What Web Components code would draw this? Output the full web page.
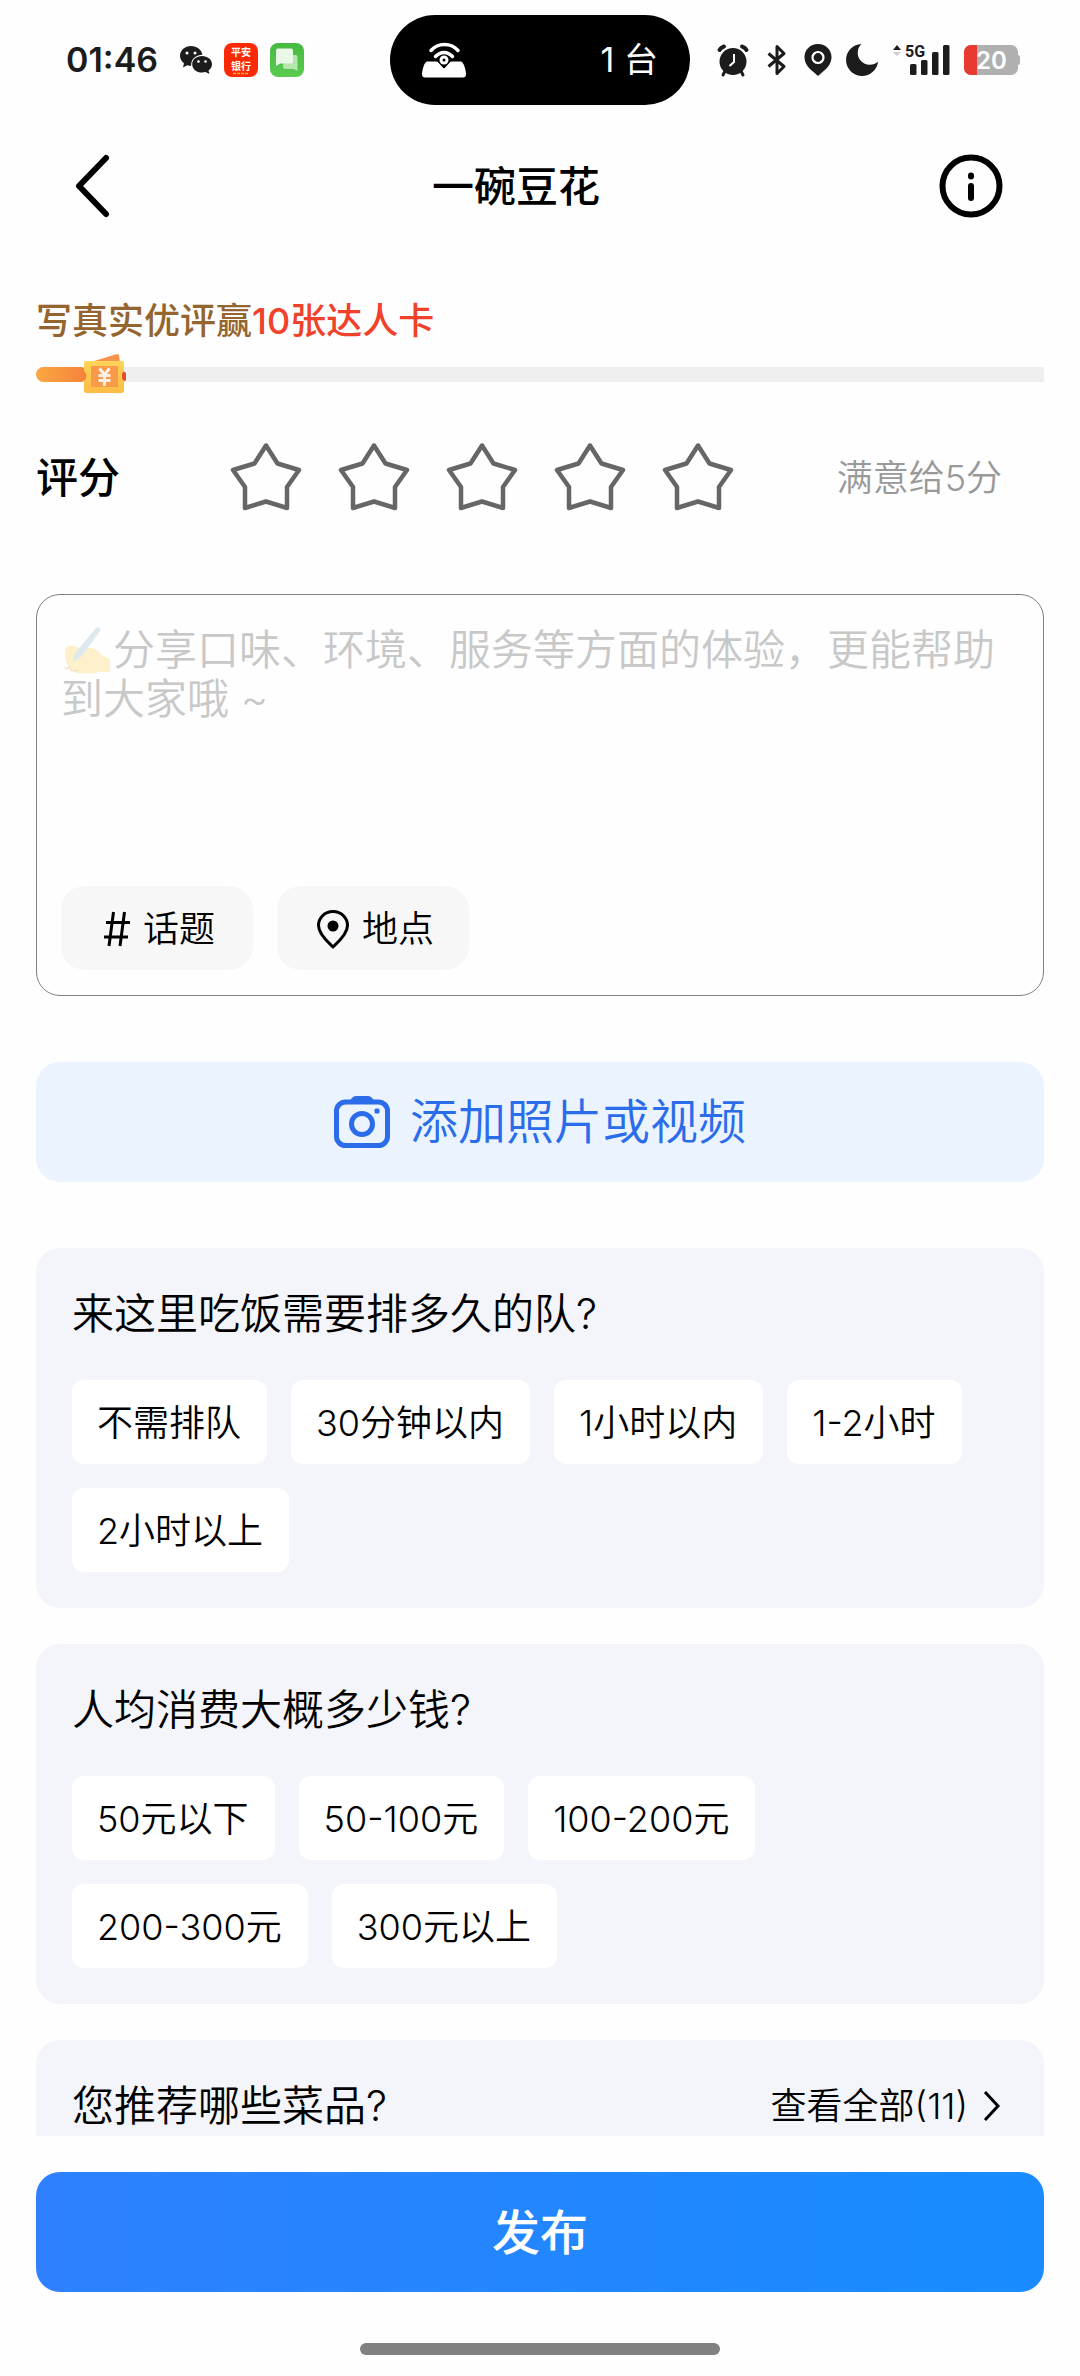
<!DOCTYPE html>
<html lang="zh-CN">
<head>
<meta charset="utf-8">
<meta name="viewport" content="width=device-width, initial-scale=1">
<title>一碗豆花</title>
<style>
  html, body { margin: 0; background: #fefefe; color: #000; }
  body { font-family: Inter, "Noto Sans CJK SC", sans-serif; font-size: 36px; line-height: 48px; }
</style>
</head>
<body>
<review-page></review-page>

<script>
const ICONS = {
  back: ['0 0 36 64', '<path d="M32 4 5 32l27 28" fill="none" stroke="currentColor" stroke-width="6" stroke-linecap="round" stroke-linejoin="round"/>'],
  info: ['0 0 64 64', '<circle cx="32" cy="32" r="28.500" fill="none" stroke="currentColor" stroke-width="6"/><rect x="29" y="18.500" width="6" height="7" rx="3" fill="currentColor"/><rect x="29" y="29" width="6" height="18" rx="3" fill="currentColor"/>'],
  star: ['0 0 72 72', '<path d="M36 4.500 47.500 22.500 69 29 57 46v21l-21-6.500L15 67V46L3 29l21.500-6.500z" fill="none" stroke="currentColor" stroke-width="4.500" stroke-linejoin="round"/>'],
  hash: ['0 0 28 38', '<path d="M10.500 2 6 36M21.500 2 17 36M3 12.500h24M1 27h24" fill="none" stroke="currentColor" stroke-width="3"/>'],
  place: ['0 0 34 40', '<path d="M17 2.500C8.500 2.500 2.500 9 2.500 16.500 2.500 25.500 13 34 17 38c4-4 14.500-12.500 14.500-21.500C31.500 9 25.500 2.500 17 2.500z" fill="none" stroke="currentColor" stroke-width="3" stroke-linejoin="round"/><circle cx="17" cy="17" r="5.500" fill="currentColor"/>'],
  camera: ['0 0 56 54', '<path d="M16 6c2-4 4-5 6-5h12c2 0 4 1 6 5v3H16z" fill="currentColor"/><rect x="2.500" y="7" width="51" height="43.500" rx="9" fill="none" stroke="currentColor" stroke-width="5"/><circle cx="28" cy="29" r="10.500" fill="none" stroke="currentColor" stroke-width="5"/><rect x="40.500" y="13.500" width="5" height="5" rx="1.500" fill="currentColor"/>'],
  next: ['0 0 20 32', '<path d="M3 2l13 14L3 30" fill="none" stroke="currentColor" stroke-width="3"/>'],
  wechat: ['0 0 32 28', '<path d="M11 0C5 0 0 4.300 0 9.800c0 3.100 1.500 5.600 4 7.400l-1 4.300 4.300-2.300c1.300.4 2.600.6 3.900.6-.4-6.300 4-10.700 11.300-11C21.500 3.500 17 0 11 0z" fill="#1c1c1c"/><path d="M22 10c-5.600 0-9.800 3.600-9.800 8.200 0 4.800 4.200 8.300 9.800 8.300 1.300 0 2.500-.2 3.500-.5l4 2-1-3.600c2.200-1.600 3.500-3.700 3.500-6.200C32 13.600 27.600 10 22 10z" fill="#1c1c1c"/><circle cx="7" cy="7" r="1.500" fill="#fff"/><circle cx="15" cy="7" r="1.500" fill="#fff"/><circle cx="18.500" cy="15.500" r="1.300" fill="#fff"/><circle cx="25.500" cy="15.500" r="1.300" fill="#fff"/>'],
  bank: ['0 0 34 34', '<rect width="34" height="34" rx="8" fill="#fb2a05"/><g fill="#fff" font-family="Noto Sans CJK SC, sans-serif" font-weight="700" font-size="10" text-anchor="middle"><text x="17" y="12.500">平安</text><text x="17" y="27">银行</text></g><path d="M9 30.500h16" stroke="#ffb020" stroke-width="1.500" stroke-dasharray="3 1"/>'],
  message: ['0 0 34 34', '<defs><linearGradient id="g" x1="0" y1="0" x2="0" y2="1"><stop stop-color="#47b940"/><stop offset="1" stop-color="#5bcb50"/></linearGradient></defs><rect width="34" height="34" rx="8" fill="url(#g)"/><path d="M14 12h11.500a2 2 0 0 1 2 2v14l-4-2H15a2 2 0 0 1-2-2z" fill="#b4e6ae"/><path d="M8 5.500h13a2 2 0 0 1 2 2v11a2 2 0 0 1-2 2H10l-4 2.500V7.500a2 2 0 0 1 2-2z" fill="#e9f8e7"/>'],
  hotspot: ['0 0 44 36', '<path d="M9 8.500C16 .5 29 .5 36 8.500M13.500 14.500c5-5.500 12-5.500 17 0" fill="none" stroke="#fff" stroke-width="3.500" stroke-linecap="round"/><path d="M5 19.500h34c2.500 0 5 9 5 12.500 0 2.500-1 3.500-3 3.500H3c-2 0-3-1-3-3.500 0-3.500 2.500-12.500 5-12.500z" fill="#fff"/><path d="M16 18.500l6 6.500 6-6.500z" fill="#000" stroke="#000" stroke-width="2.500" stroke-linejoin="round"/><circle cx="22" cy="18" r="4.500" fill="#fff"/><circle cx="22" cy="18" r="1.500" fill="#000"/>'],
  alarm: ['0 0 32 32', '<g fill="none" stroke="#1c1c1c" stroke-width="4" stroke-linecap="round"><path d="M2.500 6c1-2 2.500-3 4.500-3.500M29.500 6c-1-2-2.500-3-4.500-3.500"/></g><path d="M8 27l-2 4M24 27l2 4" stroke="#1c1c1c" stroke-width="3" stroke-linecap="round"/><circle cx="16" cy="17.500" r="13.500" fill="#1c1c1c"/><path d="M17 10v8l-4.500 4" fill="none" stroke="#fff" stroke-width="2"/>'],
  bluetooth: ['0 0 20 32', '<path d="M1.500 9.500 17 22.500 10 29.500V2.500L17 9.500 1.500 22.500" fill="none" stroke="#1c1c1c" stroke-width="3" stroke-linejoin="round"/>'],
  pin: ['0 0 28 32', '<path d="M14 0C6 0 .5 6 .5 13c0 6.500 4 11 9 15l4.500 4 4.500-4c5-4 9-8.500 9-15C27.500 6 22 0 14 0z" fill="#1c1c1c"/><circle cx="14" cy="13.500" r="5.500" fill="none" stroke="#fff" stroke-width="2.200"/>'],
  moon: ['0 0 32 32', '<path d="M15.500 0A16 16 0 1 0 32 17.500 11.500 11.500 0 0 1 15.500 0z" fill="#1c1c1c"/>'],
  signal: ['0 0 58 32', '<path d="M1 6l4-5 4 5z" fill="#1c1c1c"/><path d="M1 8l4 4 4-4z" fill="#ccc"/><text x="13" y="12.500" font-family="Roboto, sans-serif" font-weight="700" font-size="16" fill="#1c1c1c">5G</text><g fill="#1c1c1c"><rect x="18" y="20" width="6.500" height="11" rx="1.500"/><rect x="29" y="16" width="6.500" height="15" rx="1.500"/><rect x="40" y="8" width="6.500" height="23" rx="1.500"/><rect x="51" y="1" width="6.500" height="30" rx="1.500"/></g>'],
  battery: ['0 0 56 30', '<clipPath id="c"><rect width="54" height="30" rx="7"/></clipPath><g clip-path="url(#c)"><rect width="54" height="30" fill="#b0b0b0"/><rect width="13" height="30" fill="#e83a30"/></g><path d="M54 10q2 0 2 2v6q0 2-2 2z" fill="#b0b0b0"/><text x="27.500" y="23.500" text-anchor="middle" font-family="Inter, sans-serif" font-weight="600" font-size="24" fill="#fff">20</text>'],
  ticket: ['0 0 44 42', '<defs><linearGradient id="t" x1="0" y1="0" x2="0" y2="1"><stop stop-color="#fcd457"/><stop offset="1" stop-color="#fdbc46"/></linearGradient></defs><path d="M8 9 34 1l2 1 1 8z" fill="#f8934a"/><path d="M39 17l4 3v7l-4 3z" fill="#e84b2c"/><path d="M3 8h36a2 2 0 0 1 2 2v8q-5 5 0 10v10a2 2 0 0 1-2 2H3a2 2 0 0 1-2-2V28q5-5 0-10v-8a2 2 0 0 1 2-2z" fill="url(#t)"/><rect x="8" y="13" width="27" height="21" rx="1" fill="#f9994a"/><path d="M16.500 15.500l5 6 5-6M15.500 22.500h12M15.500 27.500h12M21.500 21v12" stroke="#fff1e6" stroke-width="3" fill="none"/>'],
  writing: ['0 0 50 50', '<path d="M3 24c1-4 4-5 9-4l9 3c8-3 14 0 20 7l7 3v13H38c-8 2-20 2-26 0l-2-3c-6-3-8-12-7-19z" fill="#fdf0ca"/><path d="M34 2c2-2 5 0 4 3L19 31l-8 5 2-9z" fill="#dde9ee"/><path d="M3 41l2 2 2-2 3 4 4-1 3 2" fill="none" stroke="#f8e4c5" stroke-width="1.500"/>']
};

const define = (name, css, html) => customElements.define(name, class extends HTMLElement {
  connectedCallback() {
    if (this.shadowRoot) return;
    const template = document.createElement('template');
    template.innerHTML = `<style>*{box-sizing:border-box}button{margin:0;padding:0;border:0;background:none;color:inherit;font:inherit;cursor:pointer}${css}</style>${typeof html === 'function' ? html(this) : html}`;
    this.attachShadow({ mode: 'open' }).append(template.content.cloneNode(true));
  }
});

define('ui-icon', ':host{display:block;flex:none}svg{display:block;overflow:visible}', el => {
  const [box, body] = ICONS[el.getAttribute('name')];
  const [, , w, h] = box.split(' ');
  return `<svg viewBox="${box}" width="${w}" height="${h}" aria-hidden="true">${body}</svg>`;
});

define('status-bar', `
  :host{display:grid;grid-template-columns:1fr auto 1fr;align-items:center;height:120px;color:#1c1c1c}
  .left{display:flex;align-items:center;gap:12px;padding-left:66px}
  time{font-size:34px;font-weight:600;margin-right:10px}
  .island{display:flex;align-items:center;justify-content:space-between;width:300px;height:90px;padding:0 32px;border-radius:45px;background:#000;color:#fff;font-size:34px}
  .right{display:flex;align-items:center;justify-content:flex-end;gap:14px;padding-right:60px}
  .bt{margin:0 3px 0 4px}
`, `
  <div class="left"><time>01:46</time><ui-icon name="wechat"></ui-icon><ui-icon name="bank"></ui-icon><ui-icon name="message"></ui-icon></div>
  <div class="island"><ui-icon name="hotspot"></ui-icon><span>1 台</span></div>
  <div class="right"><ui-icon name="alarm"></ui-icon><ui-icon class="bt" name="bluetooth"></ui-icon><ui-icon name="pin"></ui-icon><ui-icon name="moon"></ui-icon><ui-icon name="signal"></ui-icon><ui-icon name="battery"></ui-icon></div>
`);

define('nav-bar', `
  :host{display:flex;align-items:center;height:132px;padding:0 46px 0 60px}
  button{display:flex;align-items:center;justify-content:center;height:84px}
  .back{width:64px}.info{width:126px}
  h1{flex:1;margin:0;padding-top:2px;text-align:center;font-size:42px;font-weight:500}
`, `
  <button class="back" aria-label="返回"><ui-icon name="back"></ui-icon></button>
  <h1><slot></slot></h1>
  <button class="info" aria-label="说明"><ui-icon name="info"></ui-icon></button>
`);

define('reward-progress', `
  :host{display:block;padding-top:45px}
  p{margin:0 0 22px;color:#95652f;font-weight:500}
  b{color:#f0412a;font-weight:500}
  .track{height:15px;background:#efefef;display:flex;align-items:center;border-radius:8px 0 0 8px}
  .fill{width:52px;height:15px;border-radius:8px;background:linear-gradient(90deg,#fba842,#f4813a)}
  ui-icon{margin:-14px 0 -12px -5px}
`, `
  <p><slot></slot><b><slot name="prize"></slot></b></p>
  <div class="track" role="progressbar" aria-label="评价进度" aria-valuenow="5" aria-valuemin="0" aria-valuemax="100"><div class="fill"></div><ui-icon name="ticket"></ui-icon></div>
`);

define('star-rating', `
  :host{display:flex;align-items:center;height:72px;padding-right:42px}
  h2{margin:0;padding-top:2px;width:194px;font-size:42px;font-weight:500}
  .stars{display:flex;gap:36px;color:#666}
  .hint{margin-left:auto;padding-top:2px;color:#999;font-weight:350}
`, `
  <h2>评分</h2>
  <div class="stars" role="group" aria-label="评分">${[1, 2, 3, 4, 5].map(n => `<button aria-label="${n}星"><ui-icon name="star"></ui-icon></button>`).join('')}</div>
  <span class="hint"><slot></slot></span>
`);

define('review-editor', `
  :host{display:flex;flex-direction:column;position:relative;box-sizing:border-box;height:402px;padding:24px 24px 25px;border:1px solid #808080;border-radius:24px}
  textarea{flex:1;width:100%;padding:6px 0 0;border:0;outline:0;resize:none;background:none;font:inherit;font-weight:350;font-size:42px;line-height:49px;text-indent:52px}
  textarea::placeholder{color:#c8c8c8;opacity:1}
  .emoji{position:absolute;left:25px;top:31px}
  .tools{display:flex;gap:24px}
  .tools button{display:flex;align-items:center;justify-content:center;gap:12px;width:192px;height:84px;padding:2px 0 0 4px;border-radius:24px;background:#f7f7f7;font-weight:350}
`, `
  <ui-icon class="emoji" name="writing"></ui-icon>
  <textarea aria-label="评价内容" placeholder="分享口味、环境、服务等方面的体验，更能帮助到大家哦 ~"></textarea>
  <div class="tools"><button><ui-icon name="hash"></ui-icon>话题</button><button><ui-icon name="place"></ui-icon>地点</button></div>
`);

define('add-media', `
  :host{display:block}
  button{display:flex;align-items:center;justify-content:center;gap:20px;width:100%;height:120px;border-radius:24px;background:#ebf3fe;color:#2a6cea;font-size:48px;font-weight:350}
`, '<button><ui-icon name="camera"></ui-icon><slot></slot></button>');

define('option-chip', `
  :host{display:block}
  button{height:84px;padding:2px 26px 0 25px;border-radius:12px;background:#fff;font-size:36px;font-weight:350;white-space:nowrap}
`, '<button><slot></slot></button>');

define('question-card', `
  :host{display:block;padding:36px;border-radius:24px;background:#f4f5fa}
  header{display:flex;align-items:center;justify-content:space-between;height:60px}
  h2{margin:0;font-size:42px;font-weight:350}
  .options{display:flex;flex-wrap:wrap;gap:24px;margin-top:36px}
`, `
  <header><h2><slot name="title"></slot></h2><slot name="more"></slot></header>
  <div class="options"><slot></slot></div>
`);

define('more-link', `
  :host{display:block}
  a{display:flex;align-items:center;gap:14px;padding-right:6px;color:inherit;text-decoration:none;font-weight:350}
`, '<a href="#dishes"><slot></slot><ui-icon name="next"></ui-icon></a>');

define('publish-bar', `
  :host{display:flex;flex-direction:column;align-items:center;gap:51px;padding:36px 36px 21px}
  button{width:100%;height:120px;padding-top:2px;border-radius:24px;background:linear-gradient(90deg,#2e80ff,#188cff);color:#fff;font-size:48px;font-weight:500}
  .home{width:360px;height:12px;border-radius:6px;background:#808080}
`, '<button><slot></slot></button><div class="home"></div>');

define('review-page', `
  :host{display:flex;flex-direction:column;height:100vh}
  main{flex:1;min-height:0;overflow:hidden;padding:0 36px;display:flex;flex-direction:column}
  main>*{flex:none}
  star-rating{margin-top:59px}
  review-editor{margin-top:81px}
  add-media{margin-top:66px}
  .questions{display:flex;flex-direction:column;gap:36px;margin-top:66px}
`, `
  <status-bar></status-bar>
  <nav-bar>一碗豆花</nav-bar>
  <main>
    <reward-progress>写真实优评赢<span slot="prize">10张达人卡</span></reward-progress>
    <star-rating>满意给5分</star-rating>
    <review-editor></review-editor>
    <add-media>添加照片或视频</add-media>
    <div class="questions">
      <question-card><span slot="title">来这里吃饭需要排多久的队?</span>
        <option-chip>不需排队</option-chip><option-chip>30分钟以内</option-chip><option-chip>1小时以内</option-chip><option-chip>1-2小时</option-chip><option-chip>2小时以上</option-chip>
      </question-card>
      <question-card><span slot="title">人均消费大概多少钱?</span>
        <option-chip>50元以下</option-chip><option-chip>50-100元</option-chip><option-chip>100-200元</option-chip><option-chip>200-300元</option-chip><option-chip>300元以上</option-chip>
      </question-card>
      <question-card id="dishes"><span slot="title">您推荐哪些菜品?</span><more-link slot="more">查看全部(11)</more-link></question-card>
    </div>
  </main>
  <publish-bar>发布</publish-bar>
`);
</script>
</body>
</html>
